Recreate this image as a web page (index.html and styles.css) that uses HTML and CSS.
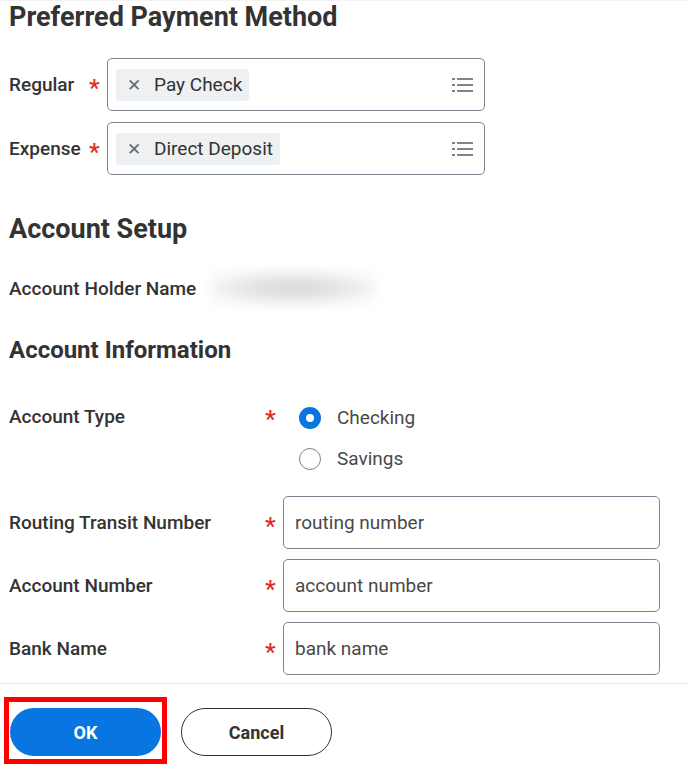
FILE: index.html
```html
<!DOCTYPE html>
<html lang="en">
<head>
    <meta charset="UTF-8">
    <meta name="viewport" content="width=device-width, initial-scale=1.0">
    <title>Payment Election</title>
    <link rel="stylesheet" href="styles.css">
</head>
<body>
    <div class="page">
        <h2 class="title">Preferred Payment Method</h2>

        <div class="pay-rows">
            <div class="pay-row">
                <div class="label">Regular</div>
                <div class="req">*</div>
                <div class="multi">
                    <span class="chip"><span class="chip-x">&#x2715;</span>Pay Check</span>
                    <svg class="list-icon" width="24" height="24" viewBox="0 0 24 24">
                        <rect x="2" y="5" width="3" height="2" fill="#7b858f"/>
                        <rect x="7" y="5" width="16" height="2" fill="#7b858f"/>
                        <rect x="2" y="11" width="3" height="2" fill="#7b858f"/>
                        <rect x="7" y="11" width="16" height="2" fill="#7b858f"/>
                        <rect x="2" y="17" width="3" height="2" fill="#7b858f"/>
                        <rect x="7" y="17" width="16" height="2" fill="#7b858f"/>
                    </svg>
                </div>
            </div>
            <div class="pay-row">
                <div class="label">Expense</div>
                <div class="req">*</div>
                <div class="multi">
                    <span class="chip"><span class="chip-x">&#x2715;</span>Direct Deposit</span>
                    <svg class="list-icon" width="24" height="24" viewBox="0 0 24 24">
                        <rect x="2" y="5" width="3" height="2" fill="#7b858f"/>
                        <rect x="7" y="5" width="16" height="2" fill="#7b858f"/>
                        <rect x="2" y="11" width="3" height="2" fill="#7b858f"/>
                        <rect x="7" y="11" width="16" height="2" fill="#7b858f"/>
                        <rect x="2" y="17" width="3" height="2" fill="#7b858f"/>
                        <rect x="7" y="17" width="16" height="2" fill="#7b858f"/>
                    </svg>
                </div>
            </div>
        </div>

        <h2 class="title setup">Account Setup</h2>
        <div class="holder">
            <div class="label holder-label">Account Holder Name</div>
            <div class="blurred"></div>
        </div>

        <h2 class="title info">Account Information</h2>

        <div class="field type-row">
            <div class="label">Account Type</div>
            <div class="req">*</div>
            <div class="radios">
                <label class="radio"><span class="dot checked"></span>Checking</label>
                <label class="radio"><span class="dot"></span>Savings</label>
            </div>
        </div>

        <div class="bank-rows">
            <div class="field">
                <div class="label">Routing Transit Number</div>
                <div class="req">*</div>
                <input class="text-input" type="text" value="routing number">
            </div>
            <div class="field">
                <div class="label">Account Number</div>
                <div class="req">*</div>
                <input class="text-input" type="text" value="account number">
            </div>
            <div class="field">
                <div class="label">Bank Name</div>
                <div class="req">*</div>
                <input class="text-input" type="text" value="bank name">
            </div>
        </div>
    </div>

    <div class="footer">
        <div class="highlight">
            <button class="btn btn-ok" type="button">OK</button>
        </div>
        <button class="btn btn-cancel" type="button">Cancel</button>
    </div>
</body>
</html>
```

FILE: styles.css
```css
body {
    margin: 0;
    font-family: Roboto, "Liberation Sans", sans-serif;
    color: #333333;
    background: #ffffff;
    border-top: 1px solid #f2f2f2;
}

.page {
    padding-left: 9px;
}

.title {
    margin: 0;
    font-size: 27px;
    line-height: 32px;
    font-weight: 700;
    color: #333333;
}

.label {
    font-size: 19px;
    font-weight: 500;
    color: #333333;
}

.req {
    color: #de2e21;
    font-size: 24px;
    font-weight: 500;
    line-height: 1;
    padding-top: 7px;
}

/* preferred payment method */
.pay-rows {
    margin-top: 25px;
    display: flex;
    flex-direction: column;
    gap: 11px;
}

.pay-row {
    display: grid;
    grid-template-columns: 80px 18px 378px;
    align-items: center;
}

.multi {
    height: 53px;
    box-sizing: border-box;
    border: 1px solid #7b858f;
    border-radius: 5px;
    display: flex;
    align-items: center;
    justify-content: space-between;
    padding: 0 10px 0 8px;
}

.chip {
    display: inline-flex;
    align-items: center;
    height: 32px;
    padding: 0 7px 0 11px;
    background: #eef0f2;
    border-radius: 3px;
    font-size: 19px;
    color: #333333;
}

.chip-x {
    font-size: 17px;
    color: #5e6a75;
    margin-right: 13px;
}

/* account setup */
.setup {
    margin-top: 38px;
}

.holder {
    margin-top: 22px;
    display: flex;
    align-items: center;
    height: 42px;
}

.holder-label {
    width: 201px;
}

.blurred {
    width: 165px;
    height: 42px;
    background: radial-gradient(ellipse 58% 45% at center, #d6d6d6 0%, #e4e4e4 45%, #f2f2f2 80%, #fbfbfb 100%);
    filter: blur(4px);
}

.info {
    margin-top: 25px;
    font-size: 24px;
}

/* account information */
.field {
    display: grid;
    grid-template-columns: 256px 18px 377px;
    align-items: center;
}

.type-row {
    margin-top: 31px;
    align-items: start;
}

.type-row .label {
    margin-top: 8px;
}

.type-row .req {
    margin-top: 10px;
    padding-top: 0;
}

.radios {
    display: flex;
    flex-direction: column;
    padding-left: 16px;
}

.radio {
    display: flex;
    align-items: center;
    height: 41px;
    font-size: 19px;
    color: #494949;
}

.dot {
    width: 22px;
    height: 22px;
    box-sizing: border-box;
    border: 1.5px solid #7b858f;
    border-radius: 50%;
    margin-right: 16px;
}

.dot.checked {
    border: 7px solid #0875e1;
}

.bank-rows {
    margin-top: 17px;
    display: flex;
    flex-direction: column;
    gap: 10px;
}

.text-input {
    height: 53px;
    box-sizing: border-box;
    border: 1px solid #7b858f;
    border-radius: 5px;
    padding: 0 11px;
    font-family: Roboto, "Liberation Sans", sans-serif;
    font-size: 19px;
    color: #494949;
    background: #ffffff;
}

/* footer */
.footer {
    margin-top: 8px;
    border-top: 1px solid #e8e8e8;
    padding: 13px 0 0 4px;
    display: flex;
    align-items: flex-start;
    gap: 14px;
}

.highlight {
    border: 5px solid #ff0000;
    padding: 6px 1px 3px 1px;
    display: flex;
}

.btn {
    width: 151px;
    height: 48px;
    border-radius: 24px;
    font-family: Roboto, "Liberation Sans", sans-serif;
    font-size: 18px;
    font-weight: 700;
    cursor: pointer;
}

.btn-ok {
    background: #0875e1;
    color: #ffffff;
    border: none;
}

.btn-cancel {
    margin-top: 11px;
    background: #ffffff;
    color: #333333;
    border: 1px solid #333333;
}
```
